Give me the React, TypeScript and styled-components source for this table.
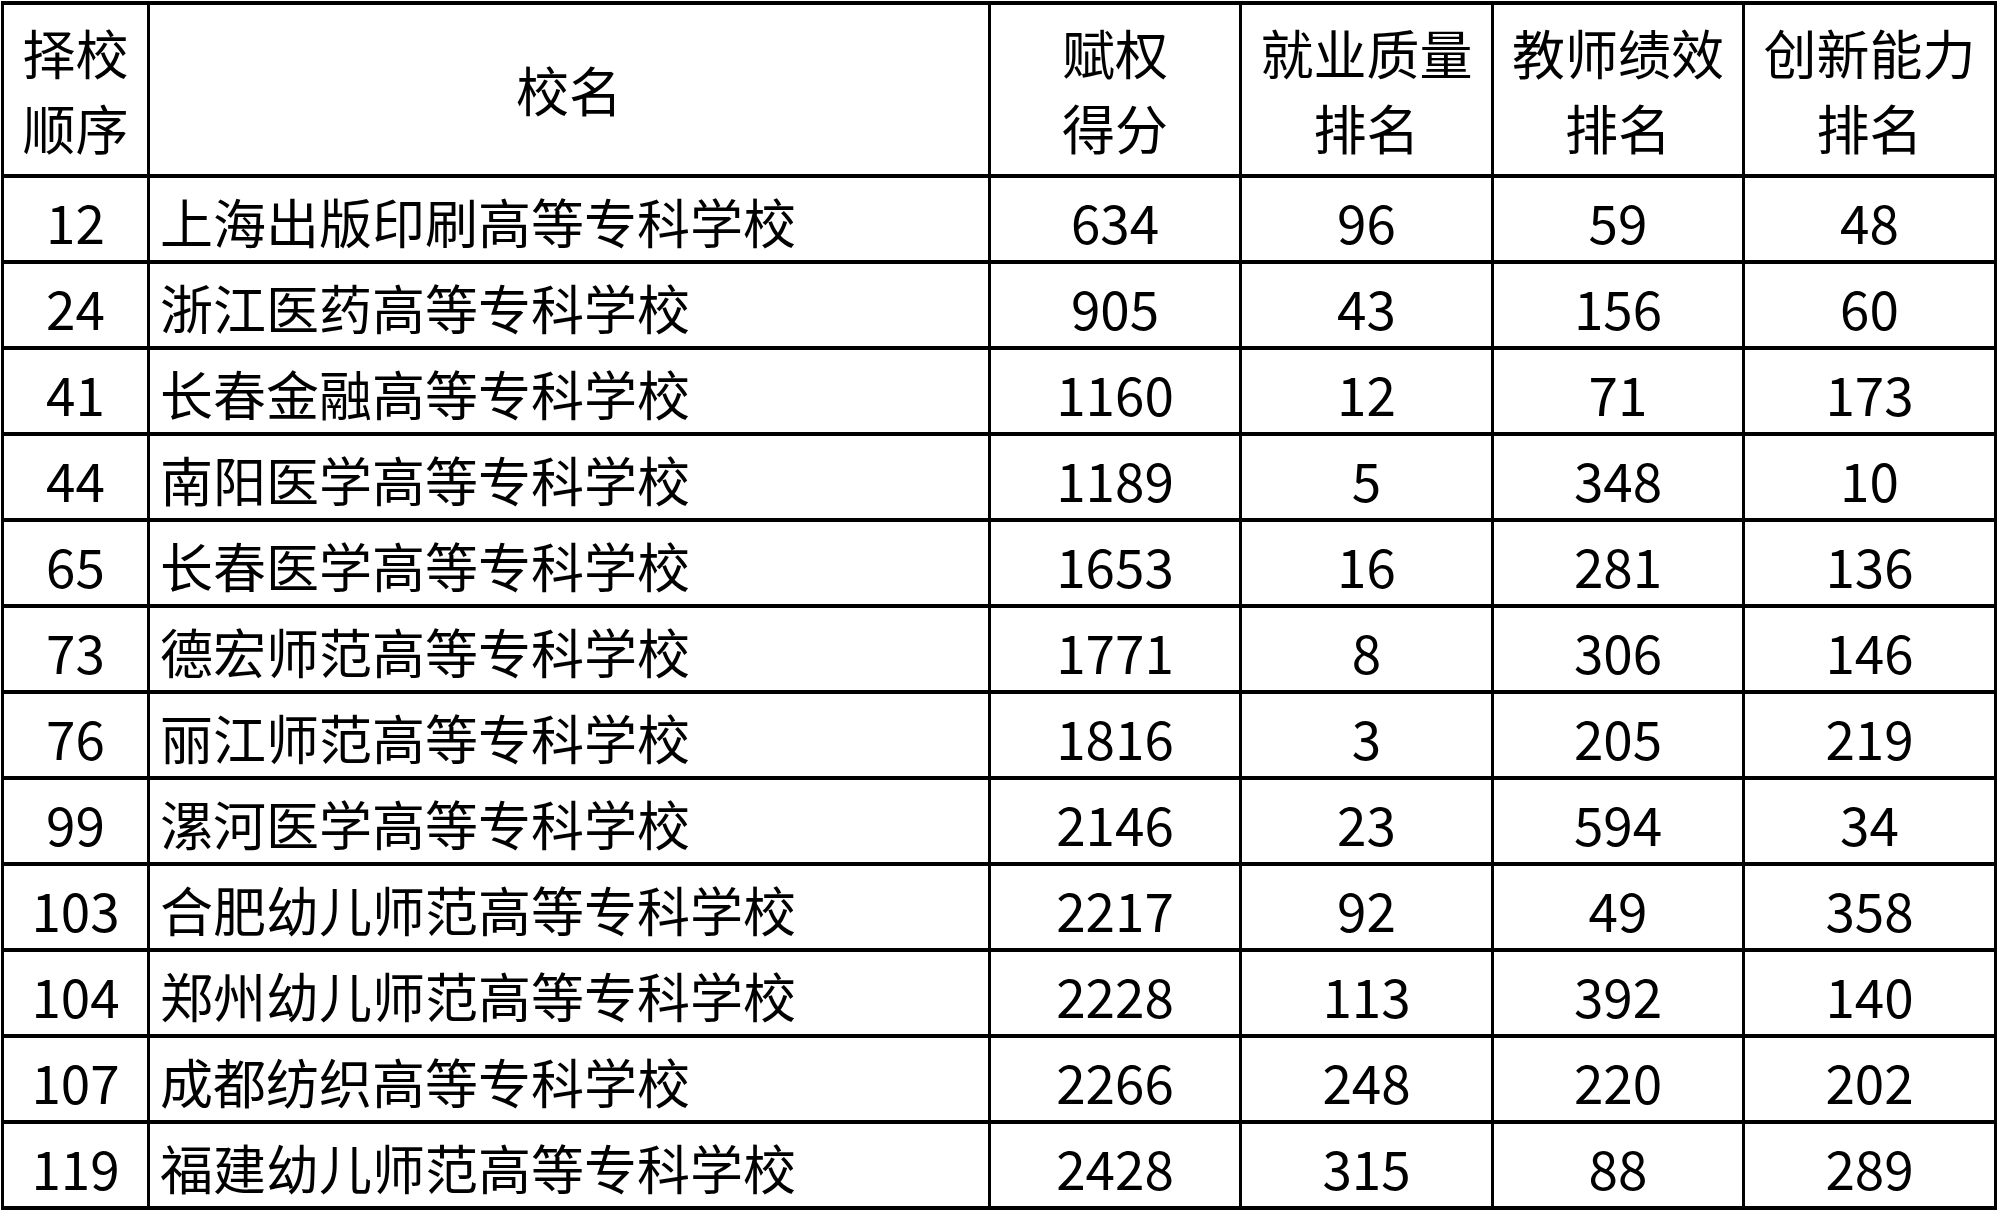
import React from "react";
import styled, { createGlobalStyle } from "styled-components";

const Global = createGlobalStyle`
  html, body { margin: 0; padding: 0; background: #fff; }
  body { font-family: "Noto Sans CJK SC", "Noto Sans", sans-serif; color: #000; }
`;

const Page = styled.div`
  padding: 1px 0 0 1px;
  width: 1998px;
`;

const Table = styled.table`
  border-collapse: collapse;
  table-layout: fixed;
  width: 1996px;
  font-family: "Noto Sans CJK SC", sans-serif;
  font-size: 53px;
  color: #000;
`;

const Col = styled.col<{ $w: number }>`
  width: ${(p) => p.$w}px;
`;

const HeadCell = styled.th`
  border: 3px solid #000;
  border-top-width: 4px;
  border-bottom-width: 4px;
  height: 169px;
  padding: 0;
  font-weight: 400;
  text-align: center;
  vertical-align: middle;
  line-height: 75px;
`;

const Cell = styled.td<{ $align?: "left" | "center" }>`
  border: 3px solid #000;
  border-top-width: 4px;
  border-bottom-width: 4px;
  height: 82.4px;
  padding: 4px 0 0 ${(p) => (p.$align === "left" ? 10 : 0)}px;
  box-sizing: border-box;
  text-align: ${(p) => p.$align ?? "center"};
  vertical-align: middle;
  line-height: 78px;
  white-space: nowrap;
`;

const Num = styled.span`
  font-family: "Noto Sans CJK SC", sans-serif;
`;

const rows: [string, string, string, string, string, string][] = [
  ["12", "上海出版印刷高等专科学校", "634", "96", "59", "48"],
  ["24", "浙江医药高等专科学校", "905", "43", "156", "60"],
  ["41", "长春金融高等专科学校", "1160", "12", "71", "173"],
  ["44", "南阳医学高等专科学校", "1189", "5", "348", "10"],
  ["65", "长春医学高等专科学校", "1653", "16", "281", "136"],
  ["73", "德宏师范高等专科学校", "1771", "8", "306", "146"],
  ["76", "丽江师范高等专科学校", "1816", "3", "205", "219"],
  ["99", "漯河医学高等专科学校", "2146", "23", "594", "34"],
  ["103", "合肥幼儿师范高等专科学校", "2217", "92", "49", "358"],
  ["104", "郑州幼儿师范高等专科学校", "2228", "113", "392", "140"],
  ["107", "成都纺织高等专科学校", "2266", "248", "220", "202"],
  ["119", "福建幼儿师范高等专科学校", "2428", "315", "88", "289"],
];

const widths = [146, 841, 251, 252, 251, 252];

export default function App() {
  return (
    <>
      <Global />
      <Page>
        <Table>
          <colgroup>
            {widths.map((w, i) => (
              <Col key={i} $w={w} />
            ))}
          </colgroup>
          <thead>
            <tr>
              <HeadCell>择校<br />顺序</HeadCell>
              <HeadCell>校名</HeadCell>
              <HeadCell>赋权<br />得分</HeadCell>
              <HeadCell>就业质量<br />排名</HeadCell>
              <HeadCell>教师绩效<br />排名</HeadCell>
              <HeadCell>创新能力<br />排名</HeadCell>
            </tr>
          </thead>
          <tbody>
            {rows.map((r) => (
              <tr key={r[0]}>
                <Cell><Num>{r[0]}</Num></Cell>
                <Cell $align="left">{r[1]}</Cell>
                <Cell><Num>{r[2]}</Num></Cell>
                <Cell><Num>{r[3]}</Num></Cell>
                <Cell><Num>{r[4]}</Num></Cell>
                <Cell><Num>{r[5]}</Num></Cell>
              </tr>
            ))}
          </tbody>
        </Table>
      </Page>
    </>
  );
}
